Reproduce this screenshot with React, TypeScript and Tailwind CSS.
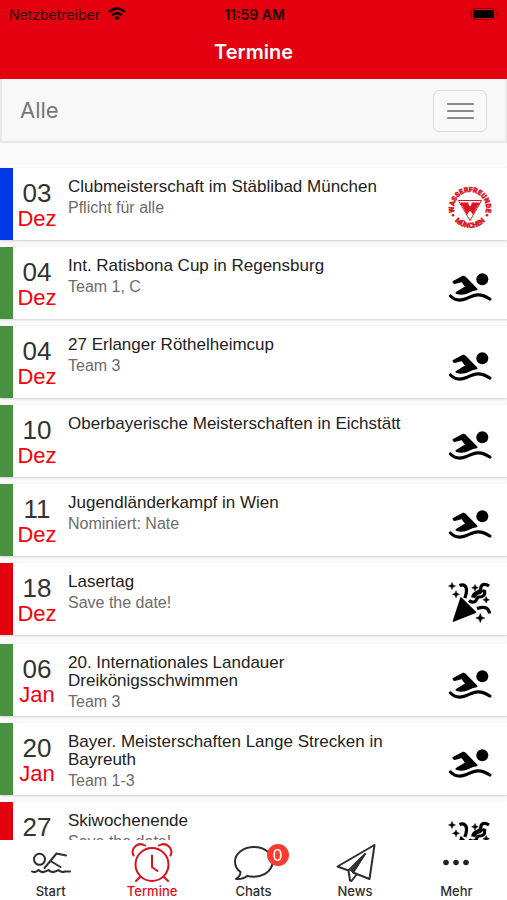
import React from "react";

type IconKind = "club" | "swim" | "party";
type Item = { day: string; title: string; note?: string; color: string; icon: IconKind };
type Month = { name: string; items: Item[] };

const BLUE = "bg-[#0037e6]";
const GREEN = "bg-[#489140]";
const RED = "bg-[#e3000f]";

const months: Month[] = [
  {
    name: "Dez",
    items: [
      { day: "03", title: "Clubmeisterschaft im Stäblibad München", note: "Pflicht für alle", color: BLUE, icon: "club" },
      { day: "04", title: "Int. Ratisbona Cup in Regensburg", note: "Team 1, C", color: GREEN, icon: "swim" },
      { day: "04", title: "27 Erlanger Röthelheimcup", note: "Team 3", color: GREEN, icon: "swim" },
      { day: "10", title: "Oberbayerische Meisterschaften in Eichstätt", color: GREEN, icon: "swim" },
      { day: "11", title: "Jugendländerkampf in Wien", note: "Nominiert: Nate", color: GREEN, icon: "swim" },
      { day: "18", title: "Lasertag", note: "Save the date!", color: RED, icon: "party" },
    ],
  },
  {
    name: "Jan",
    items: [
      { day: "06", title: "20. Internationales Landauer Dreikönigsschwimmen", note: "Team 3", color: GREEN, icon: "swim" },
      { day: "20", title: "Bayer. Meisterschaften Lange Strecken in Bayreuth", note: "Team 1-3", color: GREEN, icon: "swim" },
      { day: "27", title: "Skiwochenende", note: "Save the date!", color: RED, icon: "party" },
    ],
  },
];

function SwimIcon() {
  return (
    <svg viewBox="0 0 44 44" className="size-11" aria-hidden="true">
      <circle cx="34.3" cy="14.3" r="6" />
      <path
        d="M5.500 16.800 15.300 11.700 17 12.500 28.500 24.200C23 24.500 20 27.800 17 28.300 13 29.300 10.500 28.600 8.500 27.800L18.300 21.900 14 16 6.500 18z"
        stroke="#000"
        strokeWidth="2"
        strokeLinejoin="round"
      />
      <path d="M2.500 31C7 35.600 12.500 36 18.500 33.500 25.500 30.500 31 26.800 41.800 34" fill="none" stroke="#000" strokeWidth="3.200" strokeLinecap="round" />
    </svg>
  );
}

function PartyIcon() {
  return (
    <svg viewBox="0 0 44 44" className="size-11" aria-hidden="true">
      <path d="M13 17 27.500 31.300 5.500 40z" stroke="#000" strokeWidth="1.500" strokeLinejoin="round" />
      <path
        d="M4 1.500 5 4l2.500 1L5 6 4 8.500 3 6 .5 5 3 4zM8 9.800l1 2.500 2.500 1-2.500 1-1 2.500-1-2.500-2.500-1 2.500-1zM27 3.500l1 2.300 2.300 1-2.300 1-1 2.300-1-2.300-2.300-1 2.300-1zM38.200 15.500l1 2.300 2.300 1-2.300 1-1 2.300-1-2.300-2.300-1 2.300-1zM32.300 32.500l1.300 3.200 3.200 1.300-3.200 1.300-1.300 3.200-1.300-3.200-3.200-1.300 3.200-1.300z"
        stroke="#000"
        strokeWidth="0.5"
      />
      <g fill="none" stroke="#000" strokeWidth="3.200">
        <path d="M11.500 4.500C16 2.500 18.800 5.500 18.500 10 18.400 13 17.500 15 16.800 17" />
        <path d="M29 27.500C35 25.500 40.500 25.500 41.500 32.500" />
        <path d="M41 5C36.500 1.800 32.500 3.500 32.800 8 32.500 12 24.500 10.500 24.800 16.500" />
        <path d="M36.500 9C37.500 14.500 35 16 31.500 16 27.500 16 30 20.500 25.500 21 23.500 21.300 22 20.500 21 19.500" />
        <path d="M25.500 16.500C28.500 16 28 12.500 31 12.500 33.500 12.500 33.500 9.500 36.500 9" strokeWidth="2" />
      </g>
    </svg>
  );
}

function ClubIcon() {
  return (
    <svg viewBox="0 0 44 44" className="size-11" fill="#dc1420" aria-hidden="true">
      <defs>
        <path id="arc-top" d="M6.500 26A16 16 0 1 1 37.500 26" />
        <path id="arc-bottom" d="M4.500 32A20.500 20.500 0 0 0 39.500 32" />
      </defs>
      <g className="font-['Roboto',sans-serif] font-black" stroke="#dc1420" strokeWidth="0.5" textAnchor="middle">
        <text className="text-[7px]">
          <textPath href="#arc-top" startOffset="50%">WASSERFREUNDE</textPath>
        </text>
        <text className="text-[7px]">
          <textPath href="#arc-bottom" startOffset="50%">MÜNCHEN</textPath>
        </text>
      </g>
      <circle cx="5" cy="29.300" r="1.300" />
      <circle cx="39" cy="29.300" r="1.300" />
      <path d="M10.500 14.500h23L22 34.500z" fill="none" stroke="#dc1420" strokeWidth="1" />
      <path d="M12.500 16.500h8v2L22 20.500l1.500-2v-2h8v2.500h-1.500L25 28.700 22 24.500 19 28.700 14 19h-1.500z" />
    </svg>
  );
}

const icons: Record<IconKind, () => React.JSX.Element> = { club: ClubIcon, swim: SwimIcon, party: PartyIcon };

function EventRow({ item, month }: { item: Item; month: string }) {
  const Icon = icons[item.icon];
  return (
    <li className="flex min-h-[72px] bg-white shadow-[0_1px_2px_#cfcfcf]">
      <div className={`w-[13px] shrink-0 ${item.color}`} />
      <div className="w-12 shrink-0 pt-[11px] text-center">
        <p className="text-[26px] leading-7 text-[#333]">{item.day}</p>
        <p className="text-[22px] leading-6 text-[#f5000f]">{month}</p>
      </div>
      <div className="min-w-0 flex-1 pt-2.5 pl-[7px]">
        <h2 className="max-w-[340px] text-[17px] leading-[18px] text-[#222]">{item.title}</h2>
        {item.note && <p className="pt-0.5 text-[16px] leading-5 text-[#6c6c6c]">{item.note}</p>}
      </div>
      <div className="shrink-0 pt-[18px] pr-[15px]">
        <Icon />
      </div>
    </li>
  );
}

const stroke = {
  fill: "none",
  stroke: "currentColor",
  strokeWidth: 2,
  strokeLinecap: "round",
  strokeLinejoin: "round",
} as const;

function Tab({ label, active, children }: { label: string; active?: boolean; children: React.ReactNode }) {
  return (
    <a
      href="#"
      aria-current={active ? "page" : undefined}
      className={`flex flex-1 flex-col items-center font-['Inter',sans-serif] text-[13px] leading-4 font-medium ${active ? "text-[#dc1020]" : "text-[#2e2e2e]"}`}
    >
      <span className="relative mt-[2px] block h-[41px] w-[44px]">{children}</span>
      {label}
    </a>
  );
}

export default function App() {
  return (
    <div className="flex h-screen flex-col overflow-hidden bg-[#fafafa] font-['Liberation_Sans',Arial,sans-serif]">
      <header className="shrink-0 bg-[#e3000f] font-['Inter',sans-serif]">
        <div className="grid h-7 grid-cols-3 items-center pr-[7px] pl-[9px] text-[14px] text-[#300004]">
          <span className="flex items-center gap-2">
            Netzbetreiber
            <svg viewBox="0 0 18 14" className="h-3.5 w-[18px]" fill="none" stroke="#100" strokeWidth="2.400" aria-hidden="true">
              <path d="M1 5Q9-2 17 5M4 8.300q5-4 10 0" />
              <path d="M6.300 10.700Q9 8.500 11.700 10.700L9 13.500z" fill="#100" stroke="none" />
            </svg>
          </span>
          <span className="text-center font-semibold text-[#200003]">11:59 AM</span>
          <svg viewBox="0 0 30 14" className="h-3.5 w-[30px] justify-self-end" aria-hidden="true">
            <rect x="1" y="1.500" width="25" height="11" rx="3" fill="none" stroke="#8f000a" />
            <rect x="3" y="3" width="21" height="8" rx="1.500" />
            <path d="M27.500 5q2 2 0 4z" fill="#8f000a" />
          </svg>
        </div>
        <h1 className="h-[51px] pt-2.5 text-center text-[20px] leading-7 font-semibold text-white">Termine</h1>
      </header>

      <nav className="flex h-16 shrink-0 items-center justify-between border-2 border-t-0 border-[#e9e9e9] bg-[#f8f8f8] px-[18px] pt-px">
        <span className="font-['Inter',sans-serif] text-[22px] text-[#777]">Alle</span>
        <button
          type="button"
          aria-label="Menü"
          className="flex h-[42px] w-[54px] flex-col items-center justify-center gap-[5px] rounded-md border border-[#ddd]"
        >
          <span className="h-0.5 w-[27px] rounded-full bg-[#888]" />
          <span className="h-0.5 w-[27px] rounded-full bg-[#888]" />
          <span className="h-0.5 w-[27px] rounded-full bg-[#888]" />
        </button>
      </nav>

      <main className="flex min-h-0 flex-1 flex-col gap-[9px] overflow-hidden pt-[25px]">
        {months.map((month) => (
          <ul key={month.name} className="flex shrink-0 flex-col gap-[7px]">
            {month.items.map((item) => (
              <EventRow key={item.title} item={item} month={month.name} />
            ))}
          </ul>
        ))}
      </main>

      <footer className="flex h-[60px] shrink-0 bg-white">
        <Tab label="Start">
          <svg viewBox="0 0 44 41" className="h-[41px] w-[44px]" {...stroke} aria-hidden="true">
            <circle cx="10.500" cy="17.300" r="5.500" />
            <path d="M37 13.500 27.500 11.500 15.500 26M21.500 19 31.500 25" />
            <path d="M3 29.500q3 1.800 6.500-1.500 3 3.300 6.500 1.500 2-.5 3.500-1.500 3 3 6.500 1.500 2-.5 3.500-1.500 3 3 6.500 1.500h5" />
          </svg>
        </Tab>
        <Tab label="Termine" active>
          <svg viewBox="0 0 44 41" className="h-[41px] w-[44px]" {...stroke} aria-hidden="true">
            <circle cx="22" cy="22.500" r="16.500" />
            <path d="M22 13.500V25l5.500 4M10 35l-4 4M34 35l4 4M3.500 13.500C0 6 8-.5 15 3.500M40.500 13.500C44 6 36-.5 29 3.500" />
          </svg>
        </Tab>
        <Tab label="Chats">
          <svg viewBox="0 0 44 41" className="h-[41px] w-[44px]" {...stroke} aria-hidden="true">
            <path d="M22 5C11.500 5 3 11.500 3 19.500c0 4.500 2 8 5.500 10.500C8.500 33 6.500 35.500 4 37c4 .3 8-.5 11-3 14 3 25.500-4 25.500-14.500C40.500 11.500 32.500 5 22 5z" />
          </svg>
          <span className="absolute top-0.5 left-[35px] flex size-[22px] items-center justify-center rounded-full bg-[#fd3b30] text-[16px] font-normal text-white">
            0
          </span>
        </Tab>
        <Tab label="News">
          <svg viewBox="0 0 44 41" className="h-[41px] w-[44px]" {...stroke} aria-hidden="true">
            <path d="M41.500 3 4.500 24.500 15.500 28.500 32 12 20 30.500 36.500 37zM15.500 28.500 17 38.500 18.500 39 24 32" />
            <path d="M32 12 17.500 28.500 20 30.500z" fill="currentColor" strokeWidth={1} />
          </svg>
        </Tab>
        <Tab label="Mehr">
          <svg viewBox="0 0 44 41" className="h-[41px] w-[44px]" fill="#222" aria-hidden="true">
            <circle cx="12" cy="20.500" r="2.800" />
            <circle cx="22" cy="20.500" r="2.800" />
            <circle cx="32" cy="20.500" r="2.800" />
          </svg>
        </Tab>
      </footer>
    </div>
  );
}
